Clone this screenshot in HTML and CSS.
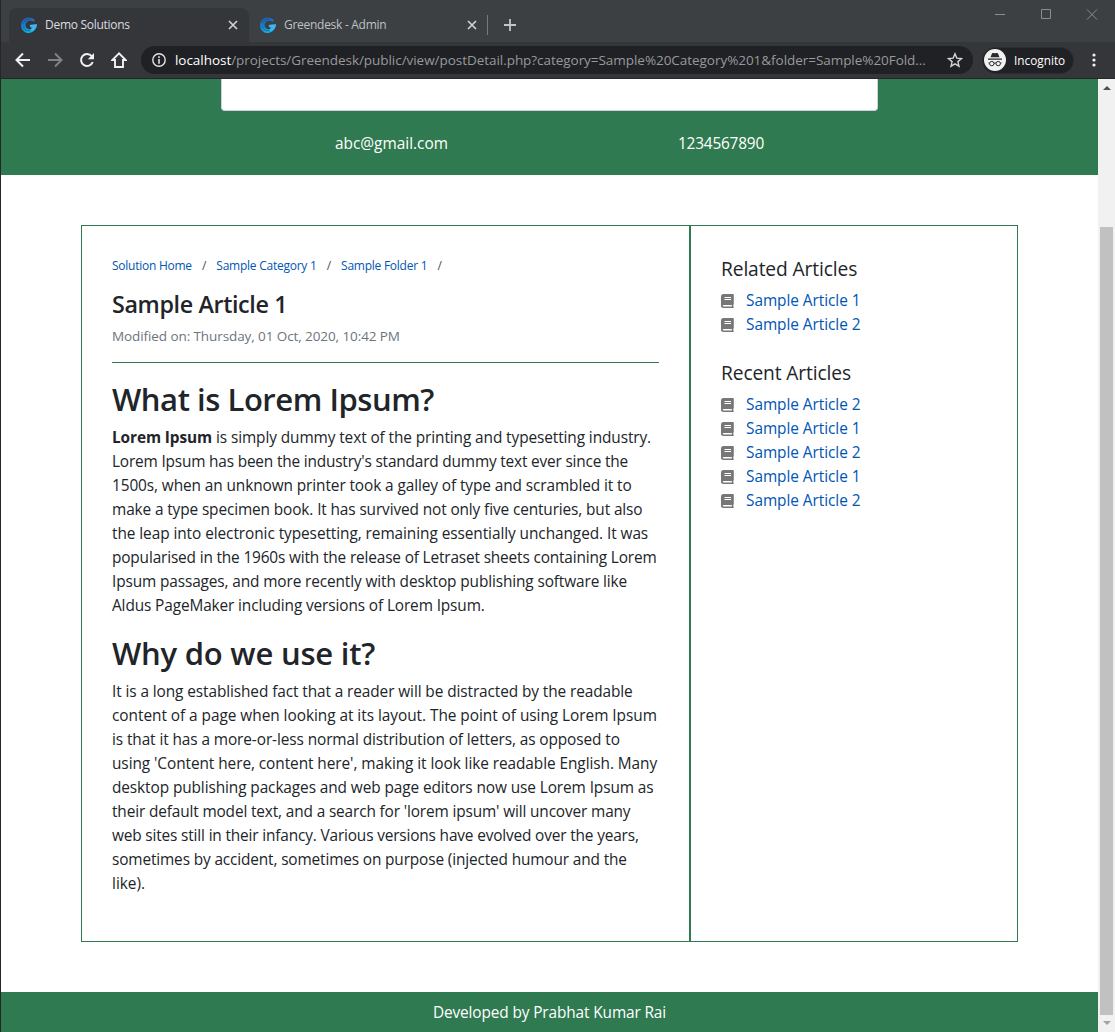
FILE: index.html
```html
<!DOCTYPE html>
<html lang="en">
<head>
<meta charset="utf-8">
<title>Demo Solutions</title>
<link rel="stylesheet" href="styles.css">
</head>
<body>
<svg class="defs" width="0" height="0">
  <defs>
    <linearGradient id="logo-blue" x1="0" y1="0" x2="0.4" y2="1"><stop offset="0" stop-color="#2352b4"/><stop offset="0.5" stop-color="#137fc9"/><stop offset="1" stop-color="#0db1ef"/></linearGradient>
    <symbol id="logo" viewBox="0 0 16 16"><path fill="url(#logo-blue)" d="M13.500 2.700C9.800-.7 3.800-.2 1.200 3.800-1.300 8 .2 13.600 4.700 15.400c5.500 2 10.900-1.700 11.200-8.100L8.600 8l1.200 2.400h2c-1.600 2.500-5.900 2.400-7-.7C3.500 5.400 7.500 1.700 13.500 4.800z"/><path fill="#42b6f2" d="M15.900 7.300 8.600 8l1.200 2.400h2c-.6.900-1.500 1.500-2.700 1.600l2.200 2c3-1.300 4.500-3.700 4.600-6.700z"/><path fill="none" stroke="#3d4550" stroke-width=".6" d="M2.300 6.500c1.300-3.300 4.300-4.800 8-4M2.500 9.500c.7 3.300 3.400 4.900 6.700 4.100"/></symbol>
    <symbol id="close" viewBox="0 0 10 10"><path d="M1 1l8 8M9 1 1 9" fill="none" stroke="currentColor" stroke-width="1.700"/></symbol>
    <symbol id="book" viewBox="0 0 13 14"><path fill="currentColor" fill-rule="evenodd" d="M2.500 0H12q.8 0 .8.800V10q0 .5-.4.800-.2 1 0 2 .4.300.4.600 0 .6-.8.600H2.500Q0 14 0 11.500v-9Q0 0 2.500 0zM3.500 3v1h6.500V3zM3.500 5v1h6.500V5zM2.600 11q-.8 0-.8.750t.8.750h8.200V11z"/></symbol>
  </defs>
</svg>
<div class="window">
  <div class="tabstrip">
    <div class="tab tab-active">
      <svg class="favicon"><use href="#logo"/></svg>
      <span class="tab-title">Demo Solutions</span>
      <svg class="tab-close"><use href="#close"/></svg>
    </div>
    <div class="tab">
      <svg class="favicon"><use href="#logo"/></svg>
      <span class="tab-title">Greendesk - Admin</span>
      <svg class="tab-close"><use href="#close"/></svg>
    </div>
    <svg class="new-tab" viewBox="0 0 12 12"><path d="M6 0v12M0 6h12" stroke="#c3c5c6" stroke-width="1.800"/></svg>
    <svg class="controls" viewBox="0 0 104 11"><g fill="none" stroke="#8b8d8f"><path d="M0 5.500h10M46.500.5h9v9h-9zM92 .5l10 10M102 .5l-10 10"/></g></svg>
  </div>
  <div class="toolbar">
    <svg class="nav" viewBox="0 0 16 16"><path d="M15 8H2.500M8 1.500 1.500 8 8 14.500" fill="none" stroke="#f1f1f2" stroke-width="2"/></svg>
    <svg class="nav" viewBox="0 0 16 16"><path d="M1 8h12.500M8 1.500 14.500 8 8 14.500" fill="none" stroke="#818285" stroke-width="2"/></svg>
    <svg class="nav" viewBox="0 0 16 16"><path d="M13.700 10A6 6 0 1 1 12.700 4.200" fill="none" stroke="#f1f1f2" stroke-width="2"/><path d="M15 1v6.200H8.800z" fill="#f1f1f2"/></svg>
    <svg class="nav home" viewBox="0 0 16 16"><path d="M8 1.300 1.300 8H4v7h8V8h2.700z" fill="none" stroke="#f1f1f2" stroke-width="1.900"/></svg>
    <div class="omnibox">
      <svg class="info" viewBox="0 0 14 14"><circle cx="7" cy="7" r="6.200" fill="none" stroke="#e2e3e4" stroke-width="1.400"/><path d="M7 3.200v1.700M7 6v4.700" stroke="#e2e3e4" stroke-width="1.600"/></svg>
      <span class="url"><span class="host">localhost</span>/projects/Greendesk/public/view/postDetail.php?category=Sample%20Category%201&amp;folder=Sample%20Fold...</span>
      <svg class="star" viewBox="0 0 16 16"><path d="M8 1.800l1.800 4.300 4.700.4-3.600 3.100 1.100 4.600L8 11.800l-4 2.400 1.100-4.600L1.500 6.500l4.700-.4z" fill="none" stroke="#d2d3d4" stroke-width="1.400"/></svg>
    </div>
    <div class="incognito">
      <svg class="spy" viewBox="0 0 22 22"><circle cx="11" cy="11" r="11" fill="#f1f1f2"/><path d="M4 9.500h14v1.200H4zM6.500 8.300l1.500-3.800q.3-.8 1.200-.5l1.800.3 1.800-.3q.9-.3 1.200.5l1.500 3.800z" fill="#292a2d"/><g fill="none" stroke="#292a2d"><circle cx="7.800" cy="14.600" r="2.200"/><circle cx="14.200" cy="14.600" r="2.200"/><path d="M10 14.200q1-.5 2 0M4.500 14h1M16.500 14h1"/></g></svg>
      <span>Incognito</span>
    </div>
    <svg class="menu" viewBox="0 0 4 14"><g fill="#f1f1f2"><circle cx="2" cy="2" r="1.600"/><circle cx="2" cy="7" r="1.600"/><circle cx="2" cy="12" r="1.600"/></g></svg>
  </div>
  <div class="viewport">
    <div class="page">
      <header class="banner">
        <div class="search"></div>
        <div class="contacts"><span>abc@gmail.com</span><span class="phone">1234567890</span></div>
      </header>
      <main class="card">
        <article class="article">
          <nav class="crumbs"><a>Solution Home</a><i>/</i><a>Sample Category 1</a><i>/</i><a>Sample Folder 1</a><i>/</i></nav>
          <h2 class="title">Sample Article 1</h2>
          <p class="modified">Modified on: Thursday, 01 Oct, 2020, 10:42 PM</p>
          <h1 class="heading">What is Lorem Ipsum?</h1>
          <p class="text">
            <span class="line k10"><b>Lorem Ipsum</b> is simply dummy text of the printing and typesetting industry.</span>
            <span class="line k18">Lorem Ipsum has been the industry's standard dummy text ever since the</span>
            <span class="line k10">1500s, when an unknown printer took a galley of type and scrambled it to</span>
            <span class="line k12">make a type specimen book. It has survived not only five centuries, but also</span>
            <span class="line k7">the leap into electronic typesetting, remaining essentially unchanged. It was</span>
            <span class="line k16">popularised in the 1960s with the release of Letraset sheets containing Lorem</span>
            <span class="line k12">Ipsum passages, and more recently with desktop publishing software like</span>
            <span class="line k12">Aldus PageMaker including versions of Lorem Ipsum.</span>
          </p>
          <h1 class="heading why">Why do we use it?</h1>
          <p class="text">
            <span class="line k10">It is a long established fact that a reader will be distracted by the readable</span>
            <span class="line k4">content of a page when looking at its layout. The point of using Lorem Ipsum</span>
            <span class="line k10">is that it has a more-or-less normal distribution of letters, as opposed to</span>
            <span class="line k7">using 'Content here, content here', making it look like readable English. Many</span>
            <span class="line k10">desktop publishing packages and web page editors now use Lorem Ipsum as</span>
            <span class="line k14">their default model text, and a search for 'lorem ipsum' will uncover many</span>
            <span class="line k16">web sites still in their infancy. Various versions have evolved over the years,</span>
            <span class="line k14">sometimes by accident, sometimes on purpose (injected humour and the</span>
            <span class="line">like).</span>
          </p>
        </article>
        <aside class="side">
          <h3>Related Articles</h3>
          <ul><li><svg><use href="#book"/></svg><a>Sample Article 1</a></li><li><svg><use href="#book"/></svg><a>Sample Article 2</a></li></ul>
          <h3>Recent Articles</h3>
          <ul><li><svg><use href="#book"/></svg><a>Sample Article 2</a></li><li><svg><use href="#book"/></svg><a>Sample Article 1</a></li><li><svg><use href="#book"/></svg><a>Sample Article 2</a></li><li><svg><use href="#book"/></svg><a>Sample Article 1</a></li><li><svg><use href="#book"/></svg><a>Sample Article 2</a></li></ul>
        </aside>
      </main>
      <footer class="footer">Developed by Prabhat Kumar Rai</footer>
    </div>
    <div class="scrollbar"><i class="up"></i><i class="thumb"></i><i class="down"></i></div>
  </div>
</div>
</body>
</html>
```
FILE: styles.css
```css
* { box-sizing: border-box; }
body { margin: 0; font: 15.4px/24px "Open Sans", "Noto Sans", sans-serif; color: #212529; overflow: hidden; }
h1, h2, h3, p, ul { margin: 0; padding: 0; }
svg { flex-shrink: 0; }
.defs { display: block; position: absolute; }
.window { width: 1115px; height: 1032px; display: flex; flex-direction: column; border-left: 1px solid #252628; background: #35363a; }
.tabstrip { height: 42px; background: #3c4043; display: flex; align-items: flex-start; padding: 8px 16px 0 8px; font-size: 12px; letter-spacing: -.28px; color: #bdc1c6; }
.tab { width: 239px; height: 34px; display: flex; align-items: center; padding: 0 10px 0 11px; }
.tab-active { width: 240px; padding: 0 11px 0 12px; background: #35363a; border-radius: 8px 8px 0 0; color: #dcdde0; }
.tab:nth-child(2) { height: 20px; margin-top: 7px; border-right: 1px solid #76797c; }
.favicon { width: 16px; height: 16px; margin-right: 8px; }
.tab-title { flex: 1; white-space: nowrap; }
.tab-close { width: 10px; height: 10px; color: #d0d1d3; }
.new-tab { width: 12px; height: 12px; margin: 11px 0 0 16px; }
.controls { width: 104px; height: 11px; margin-left: auto; margin-top: 1px; }
.toolbar { height: 37px; display: flex; align-items: center; padding: 0 19px 0 14px; border-bottom: 1px solid #252628; }
.nav { width: 16px; height: 16px; margin-right: 16px; }
.home { margin-right: 14px; }
.omnibox { width: 832px; height: 28px; border-radius: 14px; background: #202124; display: flex; align-items: center; padding: 0 10px 0 11px; }
.info { width: 14px; height: 14px; margin-right: 9px; }
.url { flex: 1; font-size: 13.5px; letter-spacing: -.045px; color: #97999c; white-space: nowrap; }
.host { color: #fff; }
.star { width: 16px; height: 16px; }
.incognito { width: 92px; height: 27px; margin-left: 9px; border-radius: 14px; background: #202124; border: 1px solid #2b2c2f; color: #fff; display: flex; align-items: center; padding-left: 1px; gap: 8px; font-size: 11.8px; }
.spy { width: 22px; height: 22px; }
.menu { width: 4px; height: 14px; margin-left: auto; }
.viewport { flex: 1; display: flex; background: #fff; }
.page { width: 1097px; display: flex; flex-direction: column; }
.banner { height: 96px; background: #2f7a50; color: #fff; }
.search { width: 657px; height: 32px; margin-left: 220px; background: #fff; border: 1px solid #ced4da; border-top: 0; border-radius: 0 0 4px 4px; }
.contacts { display: flex; justify-content: center; margin-top: 21px; gap: 230px; }
.phone { letter-spacing: -.2px; }
.card { width: 937px; height: 717px; margin: 50px 0 0 80px; border: 1px solid #2f7a50; display: flex; }
.article { width: 609px; padding: 27px 30px 0; border-right: 2px solid #2f7a50; }
.crumbs { font-size: 12px; letter-spacing: -.25px; line-height: 26px; display: flex; color: #6c757d; }
.crumbs i { font-style: normal; width: 24.5px; text-align: center; color: #495057; }
a { color: #0056b3; }
.title { font-size: 23.3px; line-height: 29px; font-weight: 600; letter-spacing: -.37px; margin-top: 11px; }
.modified { font-size: 13.5px; line-height: 22px; letter-spacing: -.09px; margin-top: 6px; height: 38px; color: #6c757d; border-bottom: 1px solid #2f7a50; margin-bottom: 17px; }
.heading { font-size: 31px; line-height: 38px; font-weight: 600; letter-spacing: -.45px; margin-bottom: 8px; }
.why { letter-spacing: -.22px; }
.text { margin-bottom: 16px; }
.line { display: block; white-space: nowrap; }
.k4 { letter-spacing: -.04px; }
.k7 { letter-spacing: -.07px; }
.k10 { letter-spacing: -.095px; }
.k12 { letter-spacing: -.12px; }
.k14 { letter-spacing: -.14px; }
.k16 { letter-spacing: -.157px; }
.k18 { letter-spacing: -.18px; }
.side { padding: 31px 30px 0; }
.side h3 { font-size: 19.2px; line-height: 24px; font-weight: 400; letter-spacing: -.12px; margin-bottom: 8px; }
.side ul { list-style: none; margin-bottom: 24px; }
.side li { display: flex; align-items: center; letter-spacing: -.05px; }
.side svg { width: 13px; height: 14px; margin-right: 12px; color: #777; }
.footer { margin-top: 50px; height: 40px; background: #2f7a50; color: #fff; text-align: center; line-height: 41px; letter-spacing: -.12px; }
.scrollbar { width: 17px; background: #f1f1f1; display: flex; flex-direction: column; align-items: center; }
.up { border: 4px solid transparent; border-top: 0; border-bottom: 4px solid #505050; margin: 7px 0 0; }
.thumb { width: 13px; height: 788px; background: #c1c1c1; margin-top: 137px; }
.down { border: 4px solid transparent; border-bottom: 0; border-top: 4px solid #a3a3a3; margin-top: 6px; }
```
